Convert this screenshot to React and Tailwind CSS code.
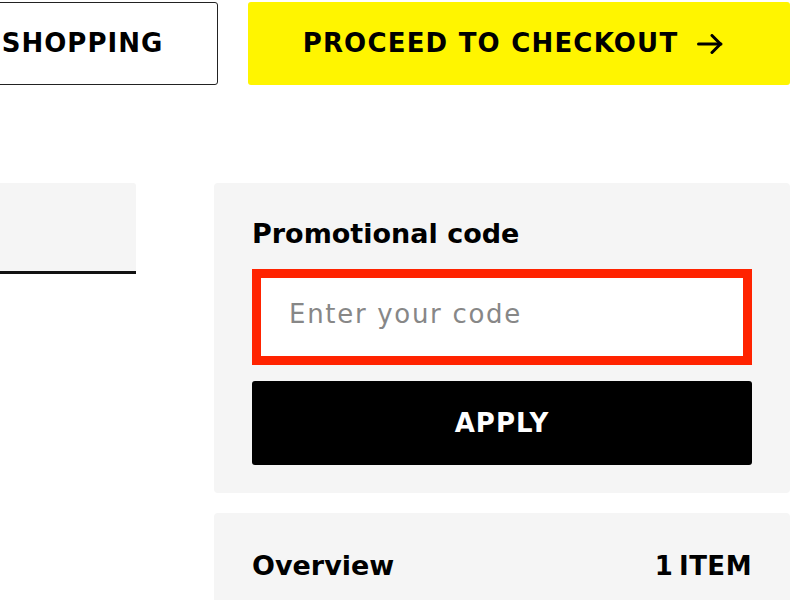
import React from 'react';

const ArrowRight = () => (
  <svg width="26" height="20" viewBox="0 0 26 20" fill="none" stroke="currentColor" strokeWidth="3" strokeLinecap="round" strokeLinejoin="round">
    <path d="M1.5 10H24" />
    <path d="M15 1.5L23.5 10L15 18.5" />
  </svg>
);

const App = () => {
  return (
    <div className="min-h-screen overflow-hidden bg-white pt-[2px] pr-[10px] font-['DejaVu_Sans',sans-serif] text-black">
      {/* Top actions */}
      <div className="flex h-[83px] gap-[30px]">
        <button className="ml-[-222px] w-[440px] shrink-0 rounded-[3px] border-[1.5px] border-[#222] bg-white text-[26px] font-bold tracking-[1px] whitespace-nowrap">
          CONTINUE SHOPPING
        </button>
        <button className="flex flex-1 items-center justify-center gap-[19px] rounded-[3px] bg-[#fff500] pr-[12px] text-[26px] font-bold tracking-[1.2px] whitespace-nowrap">
          <span>PROCEED TO CHECKOUT</span>
          <ArrowRight />
        </button>
      </div>

      <div className="mt-[98px] flex gap-[78px]">
        {/* Left column (cut off) */}
        <div className="h-[91px] w-[136px] shrink-0 rounded-tr-[3px] border-b-[3px] border-[#111] bg-[#f5f5f5]" />

        {/* Right column */}
        <div className="flex flex-1 flex-col gap-[20px]">
          <section className="rounded-[4px] bg-[#f5f5f5] px-[38px] pt-[37px] pb-[28px]">
            <h2 className="text-[27px] leading-[27px] font-bold">Promotional code</h2>
            <input
              type="text"
              placeholder="Enter your code"
              className="mt-[22px] block h-[96px] w-full border-[9px] border-[#ff2300] bg-white pb-[6px] pl-[28px] text-[26px] tracking-[1.7px] text-black outline-none placeholder:text-[#878787]"
            />
            <button className="mt-[16px] block h-[84px] w-full rounded-[3px] bg-black text-[26px] font-bold tracking-[1px] text-white">
              APPLY
            </button>
          </section>

          <section className="h-[120px] rounded-[4px] bg-[#f5f5f5] px-[38px] pt-[39px]">
            <div className="flex items-baseline justify-between">
              <span className="text-[27px] leading-[27px] font-bold">Overview</span>
              <span className="text-[26px] leading-[27px] font-bold tracking-[0.5px] [word-spacing:-4px]">1 ITEM</span>
            </div>
          </section>
        </div>
      </div>
    </div>
  );
};

export default App;
